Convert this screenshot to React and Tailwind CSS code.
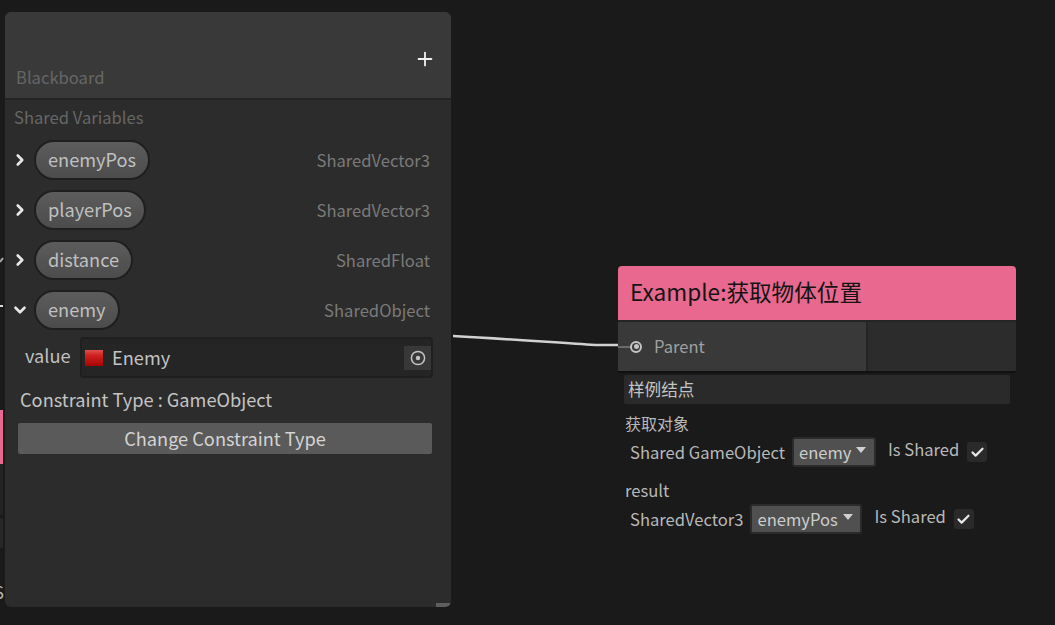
import { Check, ChevronDown, ChevronRight, Plus } from 'lucide-react'

const variables = [
  { name: 'enemyPos', type: 'SharedVector3' },
  { name: 'playerPos', type: 'SharedVector3' },
  { name: 'distance', type: 'SharedFloat' },
  { name: 'enemy', type: 'SharedObject', open: true },
]

function VariableRow({ name, type, open }) {
  const Icon = open ? ChevronDown : ChevronRight
  return (
    <div className="flex items-center h-[50px] pl-[6px] pr-[21px]">
      <div className="w-[23px] flex items-center">
        <Icon size={18} strokeWidth={3.5} className="text-[#e8e8e8]" />
      </div>
      <div className="h-[40px] px-[12px] pb-[1px] flex items-center rounded-[20px] border-2 border-[#1f1f1f] bg-gradient-to-b from-[#5c5c5c] to-[#4c4c4c] text-[18.2px] text-[#c0c0c0]">
        {name}
      </div>
      <div className="ml-auto text-[16.6px] text-[#7a7a7a]">{type}</div>
    </div>
  )
}

function Blackboard() {
  return (
    <div className="absolute left-[5px] top-[12px] w-[446px] h-[595px] rounded-[6px] bg-[#2c2c2c] overflow-hidden">
      <div className="h-[86px] bg-[#393939] flex items-end justify-between pl-[11px] pr-[15px] pb-[8px]">
        <span className="text-[16.6px] text-[#666666]">Blackboard</span>
        <Plus size={22} strokeWidth={2} className="text-[#f0f0f0] mb-[20px]" />
      </div>
      <div className="h-[2px] bg-[#242424]" />
      <div className="h-[35px] pl-[9px] flex items-center text-[16.6px] text-[#666666]">Shared Variables</div>
      {variables.map(v => (
        <VariableRow key={v.name} {...v} />
      ))}
      <div className="flex items-center pl-[20px] pr-[18px] mt-[2px]">
        <span className="w-[55px] text-[18.2px] text-[#c0c0c0] -mt-[4px]">value</span>
        <div className="flex-1 h-[41px] flex items-center rounded-[4px] border-2 border-[#1f1f1f] bg-[#252525] pl-[3px]">
          <svg width="18" height="16" viewBox="0 0 18 16" className="shrink-0">
            <defs>
              <linearGradient id="cube" x1="0" y1="0" x2="0" y2="1">
                <stop offset="0" stopColor="#e05050" />
                <stop offset="0.35" stopColor="#d02020" />
                <stop offset="1" stopColor="#a80404" />
              </linearGradient>
            </defs>
            <rect width="18" height="16" fill="url(#cube)" />
          </svg>
          <span className="ml-[9px] text-[18.2px] text-[#c4c4c4]">Enemy</span>
          <div className="ml-auto w-[27px] h-[24px] bg-[#383838] flex items-center justify-center">
            <svg width="16" height="16" viewBox="0 0 16 16">
              <circle cx="8" cy="8" r="6.6" fill="none" stroke="#c4c4c4" strokeWidth="1.5" />
              <circle cx="8" cy="8" r="2.2" fill="#c4c4c4" />
            </svg>
          </div>
        </div>
      </div>
      <div className="pl-[15px] mt-[8px] h-[27px] flex items-center text-[18.2px] text-[#c4c4c4]">Constraint Type : GameObject</div>
      <div className="ml-[13px] mr-[19px] mt-[10px] h-[31px] rounded-[2px] bg-[#5a5a5a] flex items-center justify-center text-[18.2px] text-[#d4d4d4]">
        Change Constraint Type
      </div>
      <div className="absolute right-0 bottom-0 w-[15px] h-[4px] bg-[#5f5f5f]" />
    </div>
  )
}

function ShareCheck() {
  return (
    <div className="w-[20px] h-[20px] rounded-[3px] bg-[#2a2a2a] flex items-center justify-center">
      <Check size={15} strokeWidth={3.5} className="text-[#e8e8e8]" />
    </div>
  )
}

function FieldRow({ label, value, width }) {
  return (
    <div className="flex items-center h-[30px] pl-[12px]">
      <span className="text-[16.6px] text-[#b8b8b8]">{label}</span>
      <div
        className={`ml-[7px] h-[30px] rounded-[3px] border-2 border-[#2b2b2b] bg-[#505050] pl-[5px] flex items-center text-[16.6px] text-[#cccccc] ${width}`}
      >
        {value}
        <span className="ml-[5px] -mt-[4px] w-0 h-0 border-x-[5.5px] border-x-transparent border-t-[6px] border-t-[#d0d0d0]" />
      </div>
      <span className="ml-[12px] -mt-[6px] text-[16.6px] text-[#b8b8b8]">Is Shared</span>
      <div className="ml-[8px]">
        <ShareCheck />
      </div>
    </div>
  )
}

function ExampleNode() {
  return (
    <div className="absolute left-[618px] top-[266px] w-[398px]">
      <div className="h-[54px] pb-[2px] rounded-t-[4px] bg-[#e8688f] flex items-center pl-[12px] text-[22.6px] text-[#141414]">
        Example:获取物体位置
      </div>
      <div className="flex h-[51px] border-t-2 border-[#242424] bg-[#2c2c2c]">
        <div className="w-[248px] bg-[#393939] flex items-center">
          {/* end of the wire, runs into the port */}
          <span className="w-[12px] h-[2px] bg-[#6a6a6a]" />
          <span className="w-[12px] h-[12px] rounded-full border-2 border-[#c4c4c4] flex items-center justify-center">
            <span className="w-[5px] h-[5px] rounded-full bg-[#c4c4c4]" />
          </span>
          <span className="ml-[12px] text-[16.6px] text-[#a0a0a0]">Parent</span>
        </div>
        <div className="w-[2px] bg-[#242424]" />
      </div>
      <div className="h-[2px] bg-[#111111]" />
      <div className="mx-[6px] mt-[2px] h-[29px] rounded-[2px] bg-[#2a2a2a] pl-[4px] flex items-center text-[16.6px] text-[#c4c4c4]">
        样例结点
      </div>
      <div className="mt-[7px] mb-[2px] pl-[7px] h-[24px] flex items-center text-[16px] text-[#b8b8b8]">获取对象</div>
      <FieldRow label="Shared GameObject" value="enemy" width="w-[84px]" />
      <div className="mt-[10px] pl-[7px] h-[27px] flex items-center text-[16.6px] text-[#b8b8b8]">result</div>
      <FieldRow label="SharedVector3" value="enemyPos" width="w-[112px]" />
    </div>
  )
}

export default function App() {
  return (
    <div
      className="relative w-[1055px] h-[625px] overflow-hidden bg-[#1a1a1a]"
      style={{ fontFamily: '"Noto Sans CJK SC", "Noto Sans", sans-serif' }}
    >
      {/* bits of another node behind the blackboard */}
      <div className="absolute left-0 top-[410px] w-[3px] h-[54px] bg-[#e8688f]" />
      <div className="absolute left-0 top-[464px] w-[3px] h-[51px] bg-[#232323]" />
      <div className="absolute left-0 top-[518px] w-[3px] h-[30px] bg-[#272727]" />
      <div className="absolute -left-[6px] top-[580px] text-[16.6px] text-[#b8b8b8]">S</div>
      <div className="absolute left-0 top-[305px] w-[3px] h-[2px] bg-[#d8d8d8]" />
      <svg width="4" height="8" viewBox="0 0 4 8" className="absolute left-0 top-[256px]">
        <path d="M0 6 L3 2" fill="none" stroke="#a8a8a8" strokeWidth="2" />
      </svg>

      <svg width="180" height="30" viewBox="0 0 180 30" className="absolute left-[450px] top-[330px]">
        <path d="M3 6 C60 9 110 13 145 15" fill="none" stroke="#d2d2d2" strokeWidth="2.5" />
        <path d="M145 15 L168 15" fill="none" stroke="#d2d2d2" strokeWidth="2.5" />
      </svg>

      <Blackboard />
      <ExampleNode />
    </div>
  )
}
